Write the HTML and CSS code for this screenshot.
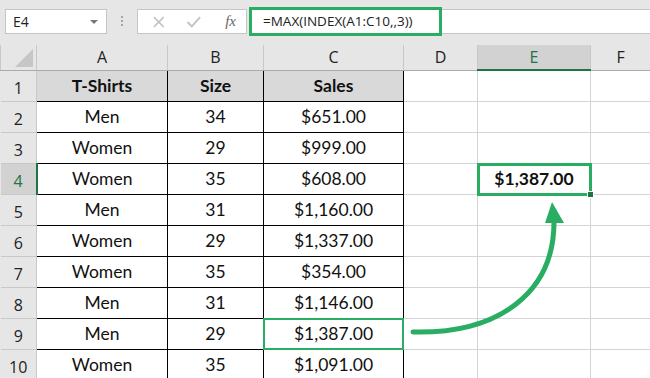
FILE: index.html
```html
<!DOCTYPE html>
<html lang="en">
<head>
  <meta charset="UTF-8" />
  <title>MAX INDEX</title>
  <link rel="stylesheet" href="styles.css">
</head>
<body>
  <div class="app">
    <div class="toolbar">
      <div class="namebox">
        <span>E4</span>
        <span class="caret"></span>
      </div>
      <div class="grip"><i></i><i></i><i></i></div>
      <div class="fxbtns">
        <svg width="14" height="14" viewBox="0 0 14 14"><path d="M2 2 L12 12 M12 2 L2 12" stroke="#c3c3c3" stroke-width="1.6" fill="none"/></svg>
        <svg width="16" height="14" viewBox="0 0 16 14"><path d="M1.5 7 L6 11.5 L14.5 2" stroke="#c3c3c3" stroke-width="2" fill="none"/></svg>
        <span class="fx">fx</span>
      </div>
      <div class="formula">
        <div class="formula-text">=MAX(INDEX(A1:C10,,3))</div>
      </div>
    </div>

    <table class="sheet">
      <colgroup>
        <col class="c-rh"><col class="c-a"><col class="c-b"><col class="c-c">
        <col class="c-d"><col class="c-e"><col class="c-f">
      </colgroup>
      <thead>
        <tr class="colhead">
          <th class="corner"><span class="tri"></span></th>
          <th>A</th><th>B</th><th>C</th><th>D</th><th class="active">E</th><th>F</th>
        </tr>
      </thead>
      <tbody>
        <tr>
          <th class="rh">1</th>
          <td class="t head">T-Shirts</td><td class="t head">Size</td><td class="t head">Sales</td>
          <td></td><td></td><td></td>
        </tr>
        <tr>
          <th class="rh">2</th>
          <td class="t">Men</td><td class="t">34</td><td class="t">$651.00</td>
          <td></td><td></td><td></td>
        </tr>
        <tr>
          <th class="rh">3</th>
          <td class="t">Women</td><td class="t">29</td><td class="t">$999.00</td>
          <td></td><td></td><td></td>
        </tr>
        <tr>
          <th class="rh active">4</th>
          <td class="t">Women</td><td class="t">35</td><td class="t">$608.00</td>
          <td></td><td class="selected">$1,387.00<span class="handle"></span></td><td></td>
        </tr>
        <tr>
          <th class="rh">5</th>
          <td class="t">Men</td><td class="t">31</td><td class="t">$1,160.00</td>
          <td></td><td></td><td></td>
        </tr>
        <tr>
          <th class="rh">6</th>
          <td class="t">Women</td><td class="t">29</td><td class="t">$1,337.00</td>
          <td></td><td></td><td></td>
        </tr>
        <tr>
          <th class="rh">7</th>
          <td class="t">Women</td><td class="t">35</td><td class="t">$354.00</td>
          <td></td><td></td><td></td>
        </tr>
        <tr>
          <th class="rh">8</th>
          <td class="t">Men</td><td class="t">31</td><td class="t">$1,146.00</td>
          <td></td><td></td><td></td>
        </tr>
        <tr>
          <th class="rh">9</th>
          <td class="t">Men</td><td class="t">29</td><td class="t marked">$1,387.00</td>
          <td></td><td></td><td></td>
        </tr>
        <tr>
          <th class="rh">10</th>
          <td class="t">Women</td><td class="t">35</td><td class="t">$1,091.00</td>
          <td></td><td></td><td></td>
        </tr>
      </tbody>
    </table>

    <svg class="arrow" width="650" height="378" viewBox="0 0 650 378">
      <path d="M413 332 C500 334, 554 292, 554 222" stroke="#28ad63" stroke-width="5" stroke-linecap="round" fill="none"/>
      <path d="M552 202 L564 223 L545 223 Z" fill="#28ad63"/>
    </svg>
  </div>
</body>
</html>
```

FILE: styles.css
```css
body {
  margin: 0;
  background: #fff;
}
.app {
  position: relative;
  width: 650px;
  height: 378px;
  overflow: hidden;
  background: #e6e6e6;
}

/* toolbar */
.toolbar {
  height: 45px;
  display: flex;
  align-items: flex-start;
  padding-top: 9px;
  box-sizing: border-box;
  font-family: "Open Sans", sans-serif;
}
.namebox {
  margin-left: 5px;
  width: 102px;
  height: 25px;
  box-sizing: border-box;
  background: #fff;
  border: 1px solid #c6c6c6;
  display: flex;
  align-items: center;
  justify-content: space-between;
  padding: 0 8px 0 7px;
  font-size: 14px;
  color: #222;
}
.caret {
  width: 0;
  height: 0;
  border-left: 4px solid transparent;
  border-right: 4px solid transparent;
  border-top: 4px solid #777;
}
.grip {
  width: 30px;
  display: flex;
  flex-direction: column;
  align-items: center;
  gap: 2px;
  padding-top: 7px;
}
.grip i {
  width: 2px;
  height: 2px;
  background: #a6a6a6;
}
.fxbtns {
  width: 110px;
  height: 25px;
  box-sizing: border-box;
  background: #fff;
  border: 1px solid #c6c6c6;
  display: flex;
  align-items: center;
  padding: 0 10px 0 14px;
  gap: 20px;
}
.fx {
  margin-left: 4px;
  font-family: "Liberation Serif", serif;
  font-style: italic;
  font-size: 15px;
  color: #666;
}
.formula {
  flex: 1;
  height: 25px;
  margin-left: 2px;
  background: #fff;
  border-top: 1px solid #c6c6c6;
  border-bottom: 1px solid #c6c6c6;
  box-sizing: border-box;
  position: relative;
}
.formula-text {
  position: absolute;
  left: 0;
  top: -3px;
  width: 193px;
  height: 29px;
  box-sizing: border-box;
  border: 3px solid #28ad63;
  padding-left: 11px;
  font-size: 13.5px;
  line-height: 23px;
  color: #222;
  background: #fff;
}

/* grid */
.sheet {
  width: 650px;
  table-layout: fixed;
  border-collapse: collapse;
  font-family: Lato, "Liberation Sans", sans-serif;
  font-size: 17.5px;
  color: #111;
}
.c-rh { width: 36px; }
.c-a { width: 131px; }
.c-b { width: 96px; }
.c-c { width: 140px; }
.c-d { width: 74px; }
.c-e { width: 113px; }
.c-f { width: 60px; }

.colhead th {
  height: 24px;
  padding: 0;
  font-family: "Open Sans", sans-serif;
  font-weight: normal;
  font-size: 16px;
  color: #222;
  background: #e6e6e6;
  border-left: 1px solid #c8c8c8;
  border-bottom: 1px solid #ababab;
}
.colhead th.active {
  background: #d2d2d2;
  color: #217346;
  border-bottom: 2px solid #217346;
}
.corner {
  position: relative;
}
.tri {
  position: absolute;
  right: 3px;
  bottom: 3px;
  width: 0;
  height: 0;
  border-left: 18px solid transparent;
  border-bottom: 18px solid #c6c6c6;
}
tbody tr {
  height: 31px;
}
td {
  padding: 0;
  text-align: center;
  background: #fff;
  border: 1px solid #d4d4d4;
  white-space: nowrap;
}
.rh {
  padding: 4px 0 0;
  font-family: "Open Sans", sans-serif;
  font-weight: normal;
  font-size: 16px;
  color: #222;
  background: #e6e6e6;
  border-bottom: 1px solid #c8c8c8;
  border-right: 1px solid #c8c8c8;
}
.rh.active {
  background: #d2d2d2;
  color: #217346;
  border-right: 2px solid #217346;
}
td.t {
  border: 1px solid #000;
}
td.head {
  background: #d9d9d9;
  font-weight: bold;
}
td.selected {
  position: relative;
  font-weight: bold;
}
td.selected::after {
  content: "";
  position: absolute;
  left: -1px;
  top: -1px;
  right: -2px;
  bottom: -2px;
  border: 3px solid #28ad63;
}
.handle {
  position: absolute;
  right: -4px;
  bottom: -4px;
  width: 5px;
  height: 5px;
  background: #217346;
  border: 1px solid #fff;
  z-index: 1;
}
td.marked {
  position: relative;
}
td.marked::after {
  content: "";
  position: absolute;
  left: -1px;
  top: -1px;
  right: -1px;
  bottom: -1px;
  border: 2px solid #28ad63;
}
.arrow {
  position: absolute;
  left: 0;
  top: 0;
  pointer-events: none;
}
```
